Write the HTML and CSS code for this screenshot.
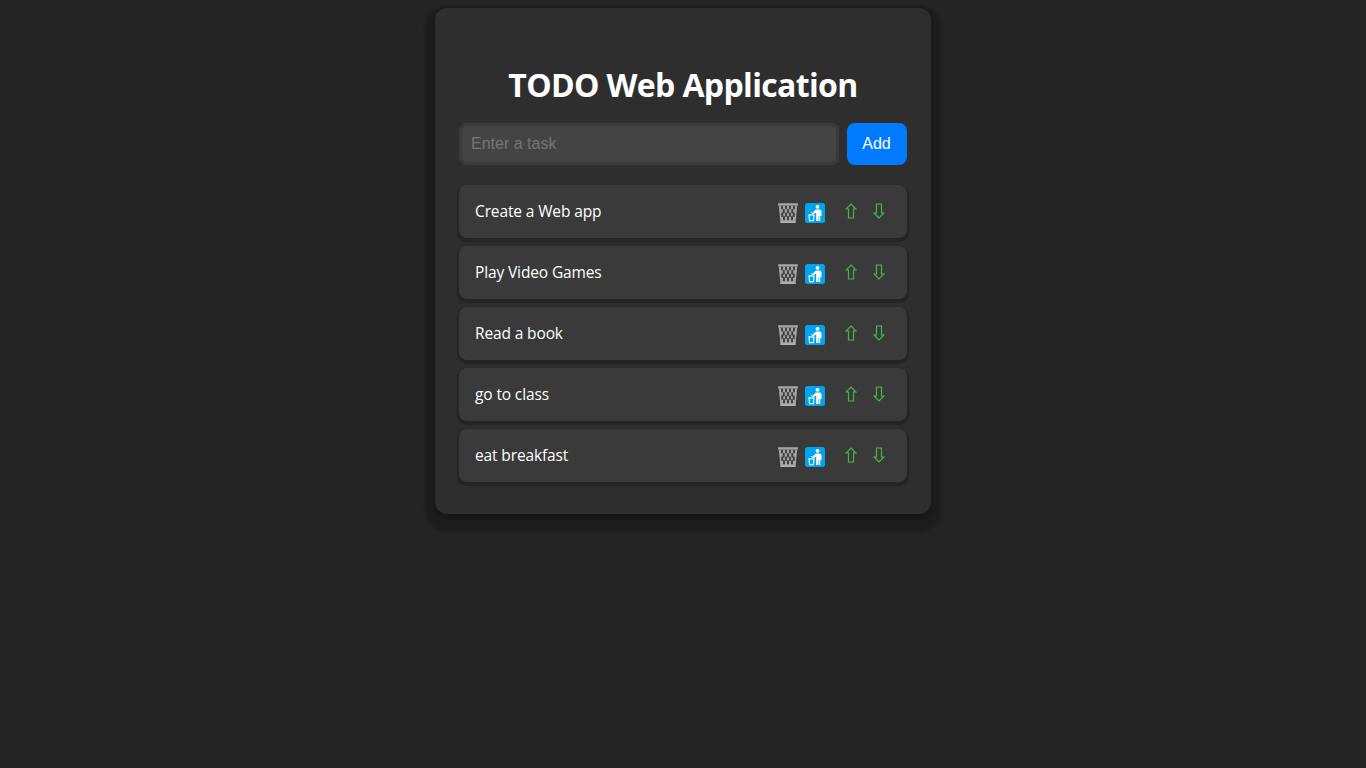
FILE: index.html
```html
<!DOCTYPE html>
<html lang="en">
<head>
<meta charset="utf-8">
<title>TODO Web Application</title>
<link rel="stylesheet" href="styles.css">
</head>
<body>
<svg class="defs" width="0" height="0">
  <symbol id="bin" viewBox="0 0 20 21">
    <path d="M.8 2.500h18.400L17.500 20H2.500z" fill="#a5a5a5"/>
    <path d="M4 3.500v2M8 3.500v2M12 3.500v2M16 3.500v2M5.800 7v2.500M10 7v2.500M14.200 7v2.500M4.200 10.500V13M8 10.500V13M12 10.500V13M15.800 10.500V13M6 14v2.500M10 14v2.500M14 14v2.500" fill="none" stroke="#404040" stroke-width="2" stroke-linecap="round"/>
    <path d="M0 .5h20V2.500H0z" fill="#999"/>
    <path d="M.5 1h19" stroke="#b4b4b4"/>
    <path d="M2.500 18.500h15V20h-15z" fill="#b2b2b2"/>
  </symbol>
  <symbol id="litter" viewBox="0 0 20 20">
    <rect width="20" height="20" rx="2.500" fill="#00a4ef"/>
    <circle cx="12.500" cy="3.800" r="1.900" fill="#fff"/>
    <path d="M10.800 6.500h3.700q2 0 2 2V13h-1.300v5h-1.700v-5H13v5h-1.800V9.500L8 11.500l-1-1.300z" fill="#fff"/>
    <path d="M4 11.800l5 .3-.6 5.600H4.600z" fill="none" stroke="#fff" stroke-width="1.100"/>
    <path d="M6 9.200l1.200.9" stroke="#fff"/>
  </symbol>
  <symbol id="arrow" viewBox="0 0 12 16">
    <path d="M6 1l4.900 5H8.500v9h-5V6H1.100z" fill="none" stroke="#4caf50" stroke-width="1.200"/>
  </symbol>
</svg>
<main class="card">
  <h1 class="title">TODO Web Application</h1>
  <form class="entry">
    <input class="field" type="text" placeholder="Enter a task">
    <button class="add" type="button">Add</button>
  </form>
  <ul class="list">
    <li class="item"><span class="label">Create a Web app</span><svg class="bin"><use href="#bin"/></svg><svg class="litter"><use href="#litter"/></svg><svg class="arrow"><use href="#arrow"/></svg><svg class="arrow down"><use href="#arrow"/></svg></li>
    <li class="item"><span class="label">Play Video Games</span><svg class="bin"><use href="#bin"/></svg><svg class="litter"><use href="#litter"/></svg><svg class="arrow"><use href="#arrow"/></svg><svg class="arrow down"><use href="#arrow"/></svg></li>
    <li class="item"><span class="label">Read a book</span><svg class="bin"><use href="#bin"/></svg><svg class="litter"><use href="#litter"/></svg><svg class="arrow"><use href="#arrow"/></svg><svg class="arrow down"><use href="#arrow"/></svg></li>
    <li class="item"><span class="label">go to class</span><svg class="bin"><use href="#bin"/></svg><svg class="litter"><use href="#litter"/></svg><svg class="arrow"><use href="#arrow"/></svg><svg class="arrow down"><use href="#arrow"/></svg></li>
    <li class="item"><span class="label">eat breakfast</span><svg class="bin"><use href="#bin"/></svg><svg class="litter"><use href="#litter"/></svg><svg class="arrow"><use href="#arrow"/></svg><svg class="arrow down"><use href="#arrow"/></svg></li>
  </ul>
</main>
</body>
</html>
```
FILE: styles.css
```css
* { box-sizing: border-box; }
body {
  margin: 0;
  padding-top: 8px;
  min-height: 100vh;
  background: #242424;
  color: #fff;
  font-family: "Segoe UI", "Open Sans", "Noto Sans", sans-serif;
}
.defs { display: block; }
.card {
  width: 496px;
  height: 506px;
  margin: 0 auto;
  padding: 55px 24px 0;
  border-radius: 12px;
  background: #2e2e2e;
  box-shadow: 0 5px 6px rgba(0, 0, 0, .25), 0 8px 3px 10px #1d1d1d;
}
.title {
  margin: 0 0 16px;
  font-size: 32px;
  line-height: 44px;
  font-weight: 700;
  letter-spacing: -.65px;
  text-align: center;
  white-space: nowrap;
}
.entry { display: flex; gap: 8px; margin: 0 0 20px; }
.field {
  flex: 1;
  min-width: 0;
  height: 42px;
  padding: 0 12px;
  border: 0;
  border-radius: 8px;
  background: #444;
  box-shadow: inset 0 0 1px 3px #3a3a3a;
  color: #fff;
  font: 16px "Liberation Sans", Arial, sans-serif;
}
.field::placeholder { color: #757575; }
.add {
  width: 60px;
  height: 42px;
  padding: 0 1px 0 0;
  border: 0;
  border-radius: 8px;
  background: #007bff;
  color: #fff;
  font: 16px "Liberation Sans", Arial, sans-serif;
}
.list { display: grid; gap: 8px; margin: 0; padding: 0; list-style: none; }
.item {
  display: flex;
  align-items: flex-start;
  height: 53px;
  padding: 18px 22px 0 16px;
  border-radius: 8px;
  background: #3a3a3a;
  box-shadow: 0 2px 1px 2px #242424;
}
.label { flex: 1; margin-top: -3px; font-size: 15.5px; line-height: 22px; letter-spacing: -.13px; }
.bin { width: 20px; height: 21px; margin-right: 7.5px; }
.litter { width: 20px; height: 20px; margin-right: 20px; }
.arrow { width: 12px; height: 16px; margin-right: 16px; }
.down { margin-right: 0; transform: rotate(180deg); }
```
